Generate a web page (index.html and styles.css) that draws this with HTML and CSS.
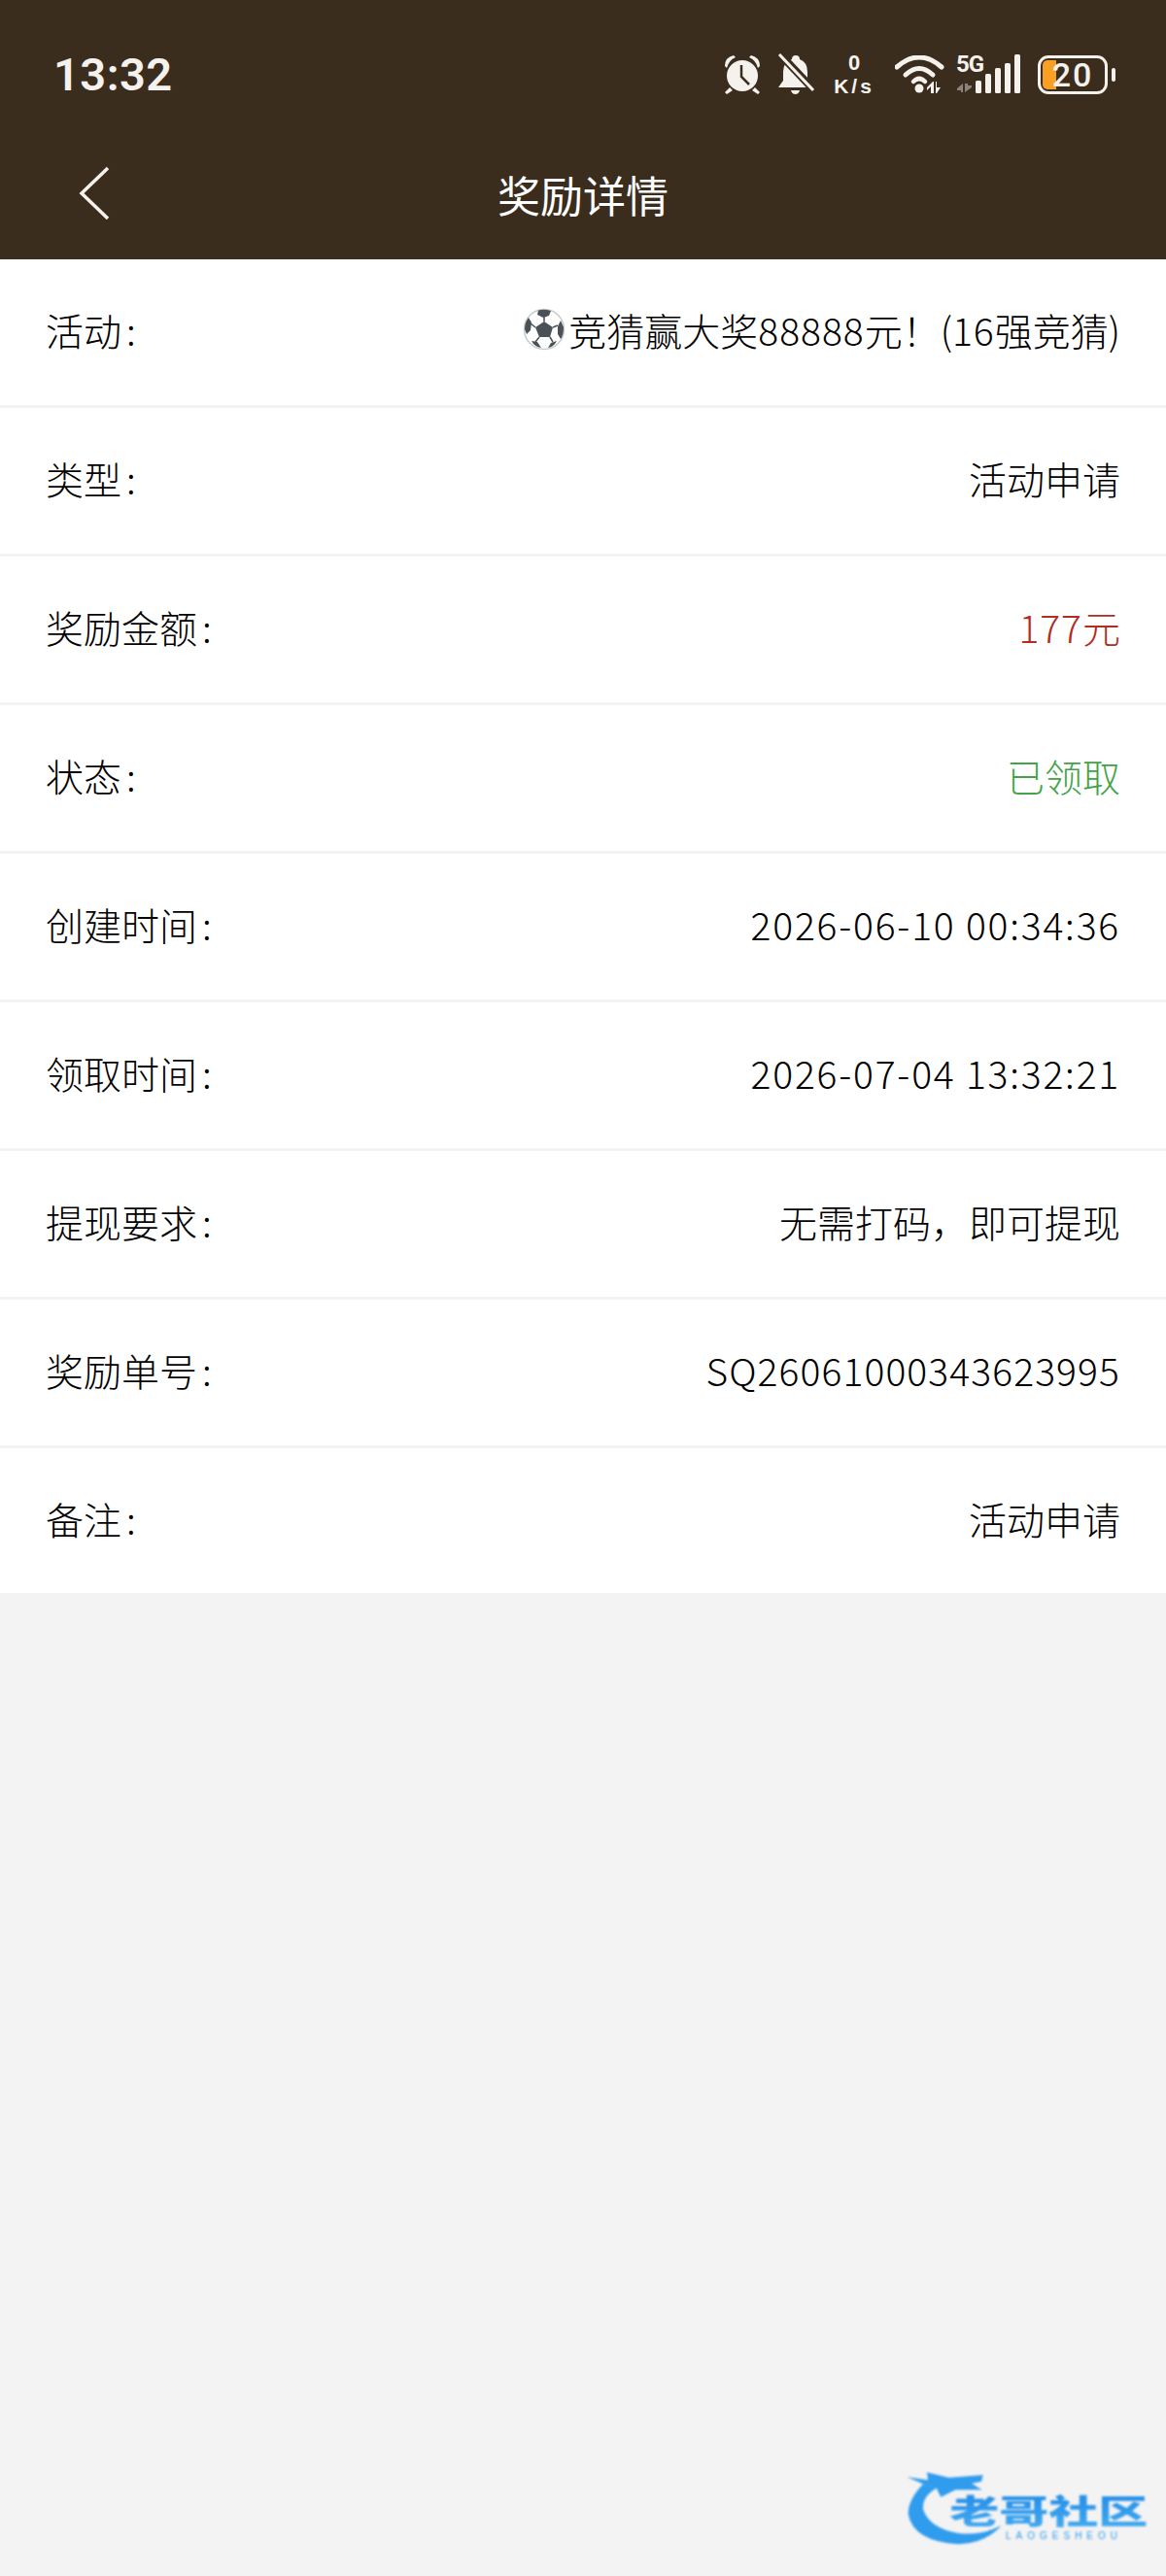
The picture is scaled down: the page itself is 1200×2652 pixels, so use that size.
FILE: index.html
```html
<!DOCTYPE HTML>
<html>
<head>
<meta http-equiv="Content-Type" content="text/html; charset=utf-8">
<title>奖励详情</title>
<link rel="stylesheet" href="styles.css">
</head>
<body>

<div id="header">
	<div id="statusBar">
		<span id="clock">13:32</span>
		<div id="statusIcons">
			<svg class="alarmIcon" width="40" height="42" viewBox="0 0 40 42">
				<circle cx="20" cy="22" r="16" fill="#f5f2ee"/>
				<path d="M2 12 Q2 3 11 1 L13 3 Q6 6 4 14 Z M38 12 Q38 3 29 1 L27 3 Q34 6 36 14 Z" fill="#f5f2ee"/>
				<path d="M7 34 L2 39 L4 41 L10 37 Z M33 34 L38 39 L36 41 L30 37 Z" fill="#f5f2ee"/>
				<path d="M19 11 V23 L27 31" fill="none" stroke="#3b2d1e" stroke-width="2.5"/>
			</svg>
			<svg class="bellIcon" width="38" height="44" viewBox="0 0 38 44">
				<path d="M19 2 Q23 2 23 6 Q31 9 31 19 V28 L36 35 H1 L6 28 V19 Q6 9 15 6 Q15 2 19 2 Z" fill="#f5f2ee"/>
				<path d="M14 38 H23 Q22 42 18.500 42 Q15 42 14 38 Z" fill="#f5f2ee"/>
				<path d="M1 -1 L38 38" stroke="#3b2d1e" stroke-width="8"/>
				<path d="M2 1 L37 38" stroke="#f5f2ee" stroke-width="3"/>
			</svg>
			<div class="speed">
				<span class="speedNum">0</span>
				<span class="speedUnit">K/s</span>
			</div>
			<svg class="wifiIcon" width="52" height="40" viewBox="0 0 52 40">
				<path d="M2 12 Q25 -8 48 12" fill="none" stroke="#f5f2ee" stroke-width="5" stroke-linecap="round"/>
				<path d="M11 20 Q25 7 39 20" fill="none" stroke="#f5f2ee" stroke-width="5" stroke-linecap="round"/>
				<path d="M19 27 Q25 21 31 27" fill="none" stroke="#f5f2ee" stroke-width="4.500" stroke-linecap="round"/>
				<circle cx="25" cy="34" r="4.500" fill="#f5f2ee"/>
				<path d="M37 39 V32 L33 36 V33 L39 27 H40 V39 Z M42 27 H43 V33 L47 33 L43 39 H42 Z" fill="#f5f2ee"/>
			</svg>
			<div class="signal">
				<span class="fiveG">5G</span>
				<svg width="67" height="42" viewBox="0 0 67 42">
					<path d="M7 39 V30 L1 35 V37 H5 V39 Z M9 30 V39 L16 34 V32 H12 V30 Z" fill="#8b8279"/>
					<rect x="20" y="27" width="6" height="13" rx="1.500" fill="#f5f2ee"/>
					<rect x="30" y="20" width="6" height="20" rx="1.500" fill="#f5f2ee"/>
					<rect x="40" y="14" width="6" height="26" rx="1.500" fill="#f5f2ee"/>
					<rect x="50" y="9" width="6" height="31" rx="1.500" fill="#f5f2ee"/>
					<rect x="60" y="0" width="6" height="40" rx="1.500" fill="#f5f2ee"/>
				</svg>
			</div>
			<div class="battery">
				<div class="batteryBody">
					<div class="batteryFill"></div>
					<span class="batteryNum">20</span>
				</div>
				<div class="batteryNub"></div>
			</div>
		</div>
	</div>
	<div id="navBar">
		<svg class="backIcon" width="34" height="56" viewBox="0 0 34 56">
			<path d="M31 2 L4 28 L31 54" fill="none" stroke="#f5f2ee" stroke-width="3.500"/>
		</svg>
		<h1 id="title">奖励详情</h1>
	</div>
</div>

<div id="detailList">
	<div class="row">
		<span class="label">活动<span class="colon">:</span></span>
		<span class="value">
			<svg class="ball" width="44" height="44" viewBox="0 0 44 44">
				<circle cx="22" cy="22" r="20.500" fill="#fff" stroke="#c9cbcc" stroke-width="1.500"/>
				<path d="M22 14 L31 20 L28 30 L17 30 L13 20 Z" fill="#4a5257"/>
				<path d="M16 2.500 Q22 1 29 3 L27 8 L21 10 L15 7 Z" fill="#4a5257"/>
				<path d="M2 22 Q2 15 6 10 L9 15 L8 23 L4 27 Z" fill="#4a5257"/>
				<path d="M42 20 Q42 28 39 32 L36 27 L36 19 L39 13 Z" fill="#4a5257"/>
				<path d="M9 34 L15 35 L19 41 Q12 40 9 34 Z M35 34 L29 36 L26 41 Q32 40 35 34 Z" fill="#4a5257"/>
				<path d="M22 14 V9 M13 20 L8 16 M31 20 L36 18 M17 30 L13 35 M28 30 L31 35" stroke="#4a5257" stroke-width="1.500"/>
			</svg><span>竞猜赢大奖<span class="num">88888</span>元！(<span class="num">16</span>强竞猜)</span>
		</span>
	</div>
	<div class="row">
		<span class="label">类型<span class="colon">:</span></span>
		<span class="value">活动申请</span>
	</div>
	<div class="row">
		<span class="label">奖励金额<span class="colon">:</span></span>
		<span class="value red"><span><span class="num">177</span>元</span></span>
	</div>
	<div class="row">
		<span class="label">状态<span class="colon">:</span></span>
		<span class="value green">已领取</span>
	</div>
	<div class="row">
		<span class="label">创建时间<span class="colon">:</span></span>
		<span class="value date">2026-06-10 00:34:36</span>
	</div>
	<div class="row">
		<span class="label">领取时间<span class="colon">:</span></span>
		<span class="value date">2026-07-04 13:32:21</span>
	</div>
	<div class="row">
		<span class="label">提现要求<span class="colon">:</span></span>
		<span class="value">无需打码，即可提现</span>
	</div>
	<div class="row">
		<span class="label">奖励单号<span class="colon">:</span></span>
		<span class="value code">SQ26061000343623995</span>
	</div>
	<div class="row">
		<span class="label">备注<span class="colon">:</span></span>
		<span class="value">活动申请</span>
	</div>
</div>

<svg id="logo" width="300" height="132" viewBox="0 0 900 396">
	<defs>
		<linearGradient id="logoBlue" x1="0" y1="0" x2="0" y2="1">
			<stop offset="0" stop-color="#1c86e6"/>
			<stop offset="1" stop-color="#46aef2"/>
		</linearGradient>
	</defs>
	<path d="M150 112 Q104 160 104 205 Q120 290 260 298 Q340 296 392 240 Q330 272 260 264 Q170 250 150 190 Q146 150 195 122 Z" fill="#2f9cee"/>
	<path d="M100 90 L165 100 L162 76 L230 92 L335 84 L330 104 L300 110 L332 130 L250 130 L205 152 L190 122 L150 112 Z" fill="#2f9cee"/>
	<text x="0" y="0" class="logoText" transform="translate(232 234) scale(1 0.66)" fill="url(#logoBlue)">老哥社区</text>
	<text x="405" y="282" class="logoSub">LAOGESHEOU</text>
</svg>

</body>
</html>
```

FILE: styles.css
```css
html,body{
	margin:0;
	padding:0;
}

body{
	width:1200px;
	height:2652px;
	background:#f3f3f3;
	position:relative;
	overflow:hidden;
	font-family:"Noto Sans CJK SC", "Noto Sans", sans-serif;
}

#header{
	background:#3b2d1e;
	height:267px;
	color:#f5f2ee;
}

#statusBar{
	height:133px;
	display:flex;
	align-items:center;
	justify-content:space-between;
	padding:20px 52px 0 55px;
	box-sizing:border-box;
}

#clock{
	font-family:Roboto, sans-serif;
	font-weight:600;
	font-size:47px;
	letter-spacing:0.5px;
}

#statusIcons{
	display:flex;
	align-items:center;
}

.bellIcon{
	margin-left:16px;
}

.speed{
	margin-left:19px;
	width:44px;
	display:flex;
	flex-direction:column;
	align-items:center;
	font-family:"Liberation Sans", sans-serif;
	font-weight:700;
	line-height:24px;
}

.speedNum{
	font-size:22px;
}

.speedUnit{
	font-size:21px;
	letter-spacing:3px;
}

.wifiIcon{
	margin-left:20px;
}

.signal{
	margin-left:11px;
	position:relative;
	height:42px;
}

.fiveG{
	position:absolute;
	left:0;
	top:-4px;
	font-family:Roboto, sans-serif;
	font-weight:700;
	font-size:24px;
	line-height:28px;
	letter-spacing:-1px;
}

.battery{
	margin-left:17px;
	display:flex;
	align-items:center;
}

.batteryBody{
	width:72px;
	height:40px;
	box-sizing:border-box;
	border:3px solid #f5f2ee;
	border-radius:11px;
	position:relative;
	overflow:hidden;
	text-align:center;
}

.batteryFill{
	position:absolute;
	left:2px;
	top:2px;
	bottom:2px;
	width:14px;
	background:#f7a024;
	border-radius:5px 0 0 5px;
}

.batteryNum{
	position:relative;
	font-family:Roboto, sans-serif;
	font-weight:500;
	font-size:34px;
	line-height:34px;
	letter-spacing:2px;
	display:block;
}

.batteryNub{
	margin-left:4px;
	width:4px;
	height:14px;
	background:#f5f2ee;
	border-radius:2px;
}

#navBar{
	height:134px;
	display:flex;
	align-items:center;
	justify-content:center;
	position:relative;
}

.backIcon{
	position:absolute;
	left:80px;
	top:38px;
}

#title{
	margin:0;
	font-weight:400;
	font-size:44px;
	color:#fff;
}

#detailList{
	background:#fff;
}

.row{
	height:153px;
	box-sizing:border-box;
	padding:0 47px 6px;
	display:flex;
	align-items:center;
	justify-content:space-between;
	border-bottom:3px solid #f3f3f3;
	font-size:39px;
	font-weight:300;
	color:#000;
}

.row:last-child{
	height:149px;
	border-bottom:0;
}

.colon{
	margin-left:5px;
}

.value{
	display:flex;
	align-items:center;
}

.date{
	letter-spacing:1.8px;
}

.code{
	letter-spacing:1.1px;
}

.num{
	letter-spacing:1px;
}

.ball{
	margin-right:3px;
}

.red{
	color:#b02d1f;
}

.green{
	color:#43a346;
}

#logo{
	position:absolute;
	right:0;
	bottom:0;
	filter:blur(0.8px);
}

.logoText{
	font-family:"Noto Sans CJK SC", sans-serif;
	font-weight:900;
	font-size:153px;
}

.logoSub{
	font-family:"Liberation Sans", sans-serif;
	font-size:30px;
	letter-spacing:15px;
	fill:#2f9cee;
}
```
